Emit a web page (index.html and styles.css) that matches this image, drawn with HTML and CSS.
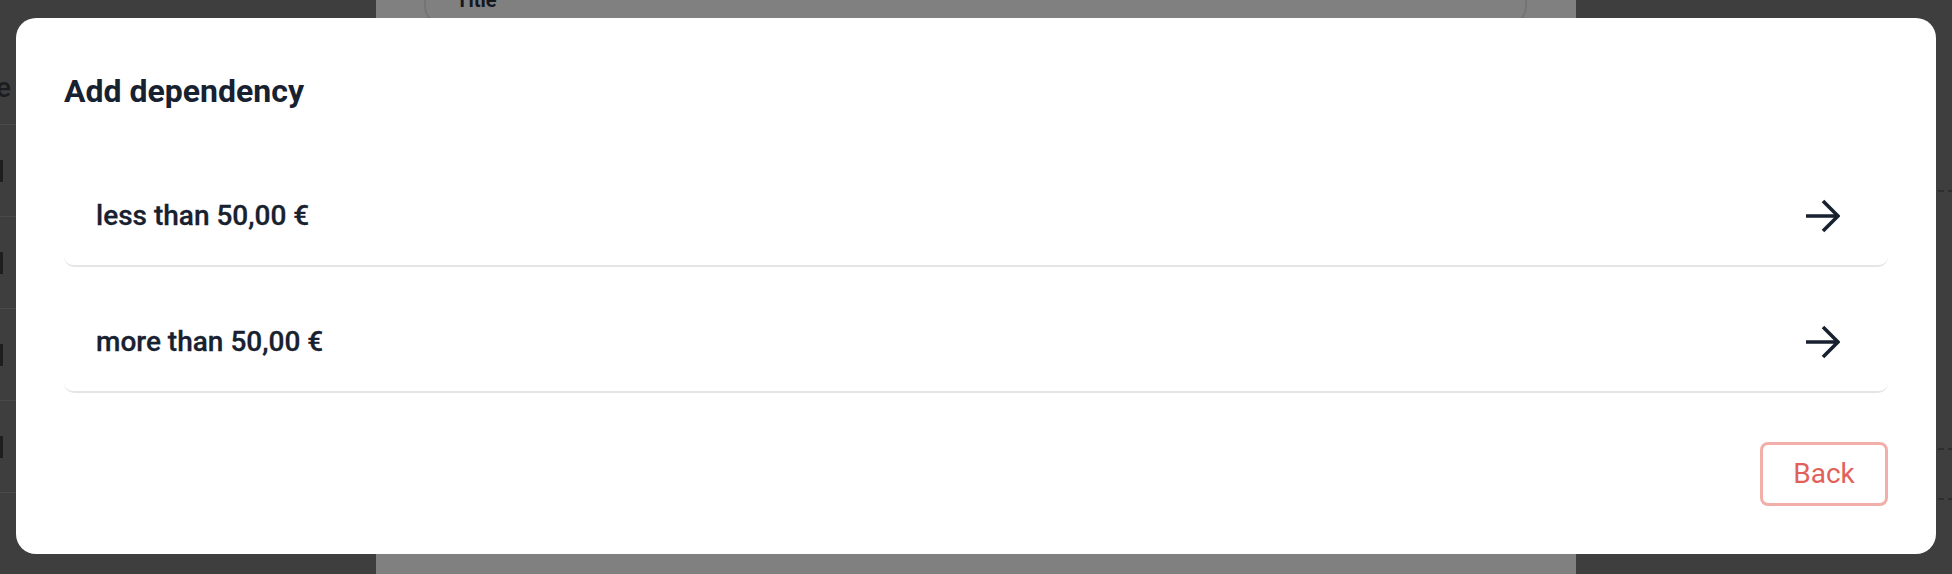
FILE: index.html
```html
<!DOCTYPE html>
<html lang="en">
<head>
<meta charset="utf-8">
<title>Add dependency</title>
<link rel="stylesheet" href="styles.css">
</head>
<body>
<div class="page">
  <aside class="side-left">
    <div class="side-head">e</div>
    <div class="side-row"><span class="mark"></span></div>
    <div class="side-row"><span class="mark"></span></div>
    <div class="side-row"><span class="mark"></span></div>
    <div class="side-row"><span class="mark"></span></div>
  </aside>
  <main class="panel">
    <div class="field">
      <span class="field-label">Title</span>
    </div>
  </main>
  <aside class="side-right">
    <div class="dash d1"></div>
    <div class="dash d2"></div>
    <div class="dash d3"></div>
  </aside>
</div>

<div class="modal" role="dialog" aria-labelledby="dlg-title">
  <h2 class="modal-title" id="dlg-title">Add dependency</h2>
  <ul class="options">
    <li class="option">
      <span class="option-label">less than 50,00 €</span>
      <svg class="arrow" viewBox="0 0 36 36" width="36" height="36" aria-hidden="true"><path d="M2 18H34M19 3L34 18L19 33" fill="none" stroke="currentColor" stroke-width="3.6" stroke-linejoin="miter"/></svg>
    </li>
    <li class="option">
      <span class="option-label">more than 50,00 €</span>
      <svg class="arrow" viewBox="0 0 36 36" width="36" height="36" aria-hidden="true"><path d="M2 18H34M19 3L34 18L19 33" fill="none" stroke="currentColor" stroke-width="3.6" stroke-linejoin="miter"/></svg>
    </li>
  </ul>
  <div class="modal-footer">
    <button class="btn-back" type="button">Back</button>
  </div>
</div>
</body>
</html>
```

FILE: styles.css
```css
* { box-sizing: border-box; }

html, body {
  margin: 0;
  padding: 0;
  width: 1952px;
  height: 574px;
  overflow: hidden;
  background: #3e3e3e;
  font-family: Roboto, "Noto Sans", "Liberation Sans", sans-serif;
}

.page {
  display: flex;
  width: 1952px;
  height: 574px;
}

.side-left {
  width: 376px;
  background: #3e3e3e;
  display: flex;
  flex-direction: column;
}

.side-head {
  height: 125px;
  padding-top: 72px;
  margin-left: -4px;
  font-size: 28px;
  line-height: 32px;
  font-weight: 500;
  color: #1b1d20;
  border-bottom: 1px solid #4a4a4a;
}

.side-row {
  height: 92px;
  border-bottom: 1px solid #4a4a4a;
  display: flex;
  align-items: center;
}

.mark {
  width: 3px;
  height: 22px;
  background: #1e1e1e;
}

.panel {
  width: 1200px;
  background: #808080;
  padding: 0 49px 0 48px;
}

.field {
  height: 60px;
  margin-top: -34px;
  border: 2px solid #747474;
  border-radius: 20px;
  padding: 20px 30px 0;
}

.field-label {
  font-size: 20px;
  font-weight: 700;
  color: #15191f;
}

.side-right {
  flex: 1;
  background: #3e3e3e;
  display: flex;
  flex-direction: column;
}

.dash {
  height: 2px;
  margin-left: 362px;
  background: repeating-linear-gradient(90deg, #2e2e2e 0 6px, transparent 6px 10px);
}
.d1 { margin-top: 190px; }
.d2 { margin-top: 256px; }
.d3 { margin-top: 48px; }

.modal {
  position: absolute;
  left: 16px;
  top: 18px;
  width: 1920px;
  background: #ffffff;
  border-radius: 20px;
  padding: 55px 48px 48px;
}

.modal-title {
  margin: 0;
  font-size: 32px;
  line-height: 36px;
  font-weight: 700;
  color: #18212f;
}

.options {
  list-style: none;
  margin: 54px 0 0;
  padding: 0;
  display: flex;
  flex-direction: column;
  gap: 22px;
}

.option {
  height: 104px;
  display: flex;
  align-items: center;
  justify-content: space-between;
  padding: 4px 48px 0 32px;
  border-bottom: 2px solid #e4e5e7;
  border-radius: 10px;
  color: #18212f;
}

.option-label {
  font-size: 28px;
  font-weight: 500;
  margin-top: -2px;
  -webkit-text-stroke: 0.3px #18212f;
}

.arrow {
  display: block;
  color: #18212f;
}

.modal-footer {
  margin-top: 49px;
  display: flex;
  justify-content: flex-end;
}

.btn-back {
  width: 128px;
  height: 64px;
  border: 3px solid #f2afa9;
  border-radius: 8px;
  background: #ffffff;
  color: #e2605a;
  font-family: Roboto, "Noto Sans", "Liberation Sans", sans-serif;
  font-size: 28px;
  font-weight: 400;
  padding: 0 0 2px;
}
```
